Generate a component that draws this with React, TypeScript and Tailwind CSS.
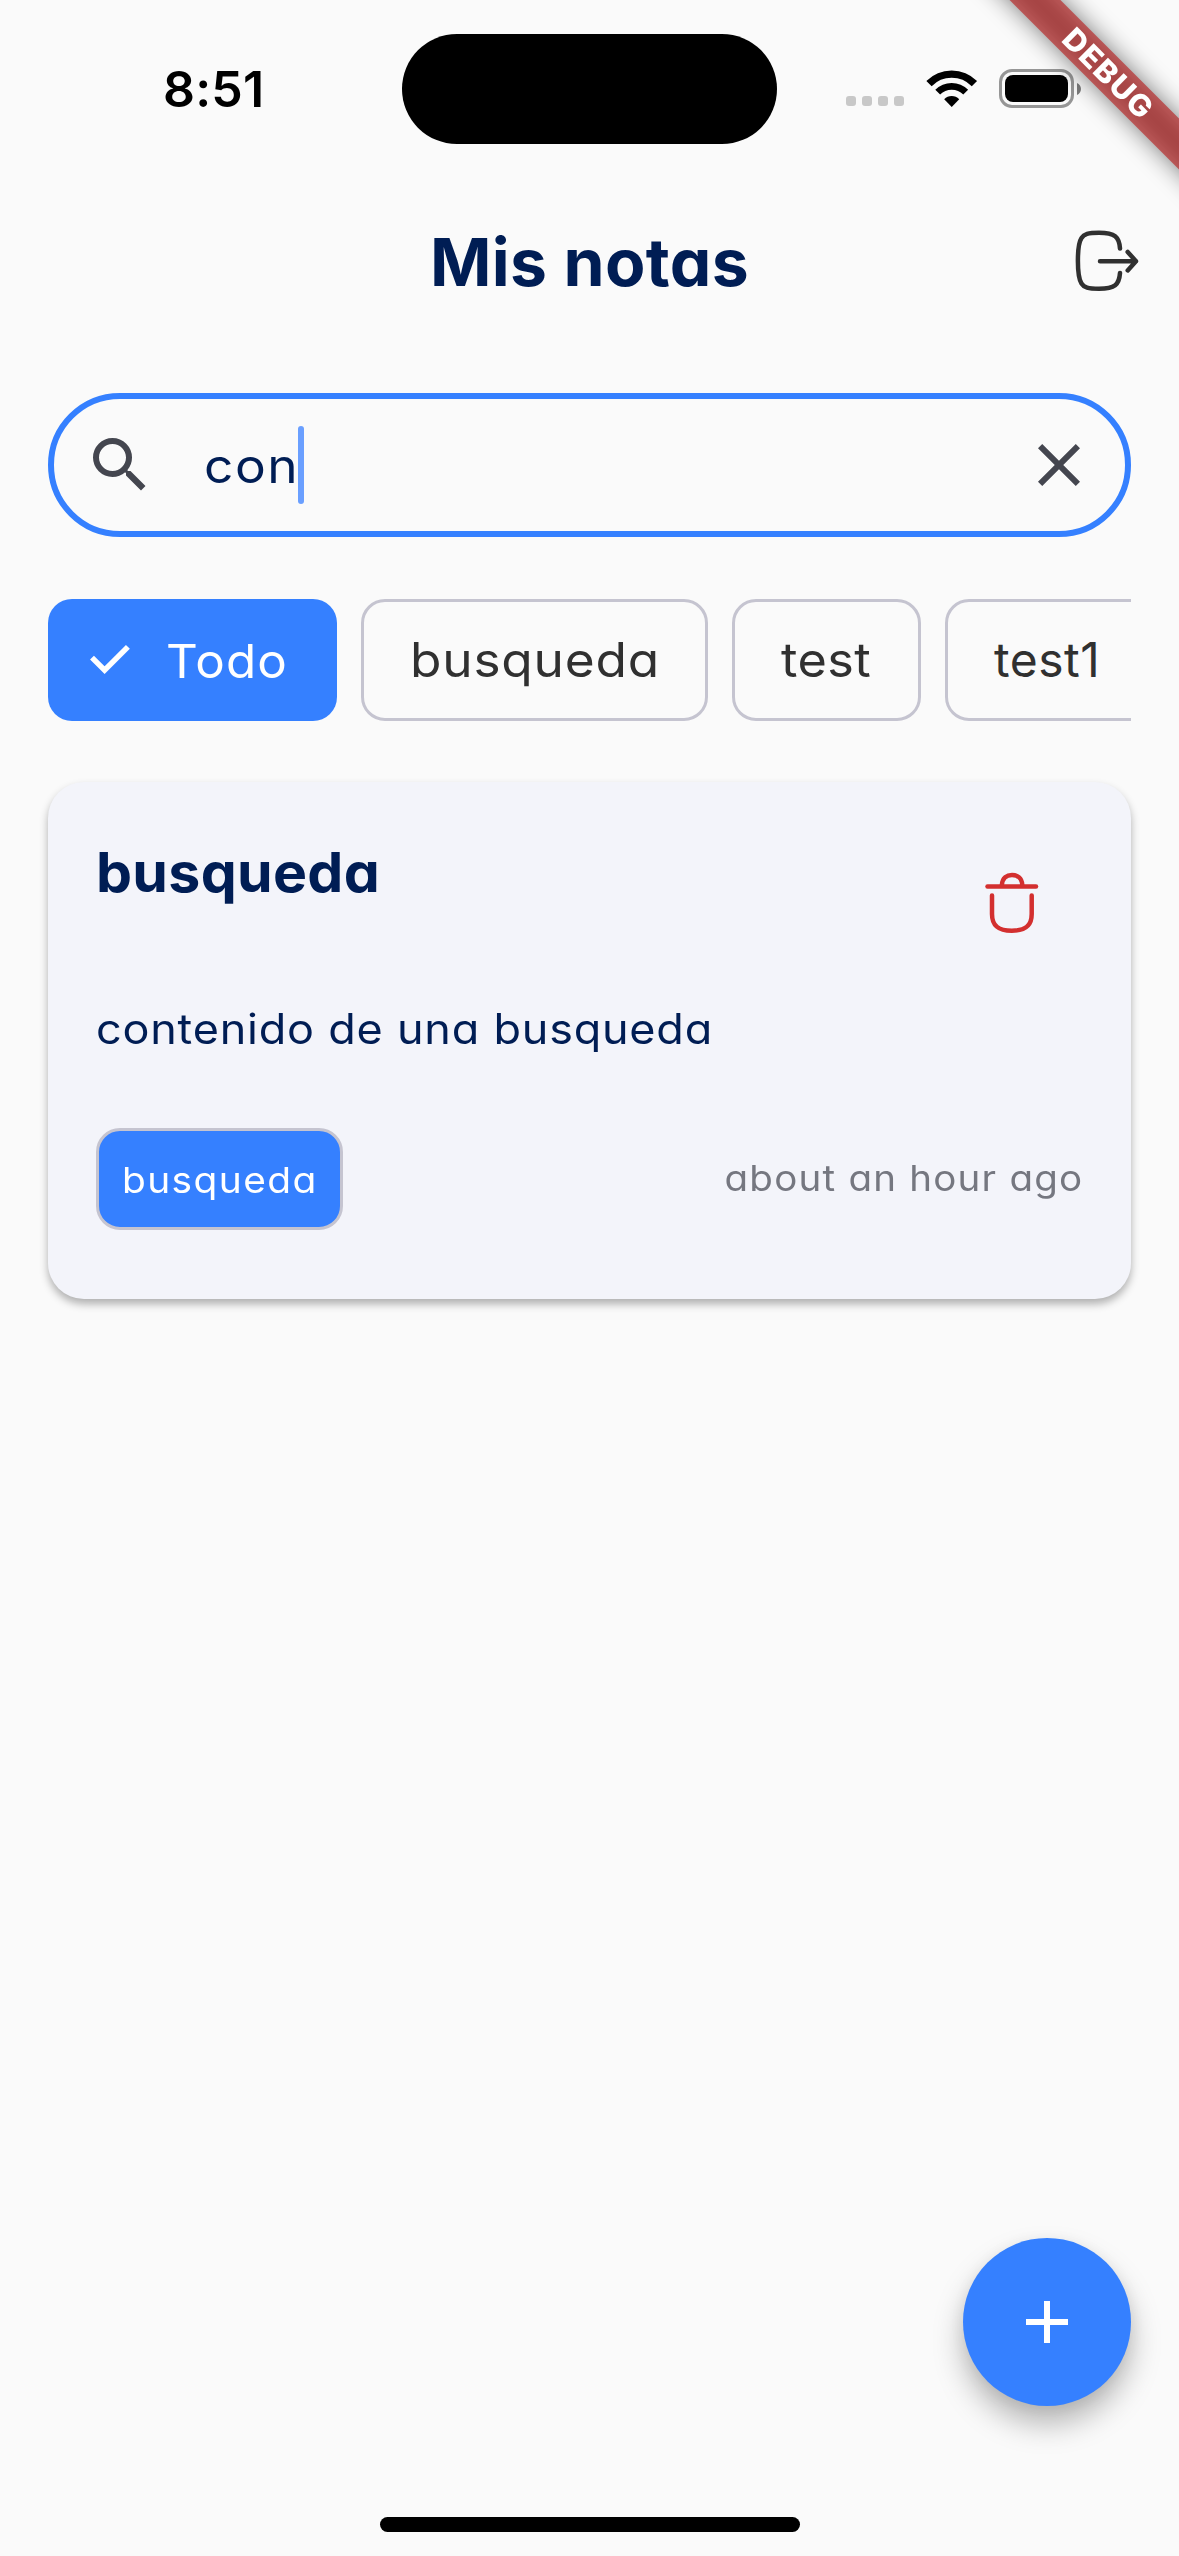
const tags = [
  { label: "busqueda", box: "w-[347px]", text: "scale-x-[1.07] tracking-[0.75px]" },
  { label: "test", box: "w-[189px]", text: "scale-x-[1.05] tracking-[0.4px]" },
  { label: "test1", box: "w-[215px]", text: "tracking-[0.5px]" },
];

function WifiIcon() {
  return (
    <svg viewBox="925 68 54 40" className="h-[40px] w-[54px]" fill="none" stroke="#000">
      <path d="M929 82.7A31.8 31.8 0 0 1 974.4 82.7" strokeWidth="7.4" />
      <path d="M937.7 91.2A19.7 19.7 0 0 1 965.7 91.2" strokeWidth="6.8" />
      <path d="M944.2 98.2A10.6 10.6 0 0 1 959.2 98.2L951.7 106Z" fill="#000" stroke="none" />
    </svg>
  );
}

function StatusBar() {
  return (
    <div className="flex h-[177px] shrink-0 items-center">
      <div className="w-[402px] pl-[163px] text-[50px] font-semibold leading-none tracking-[0.2px] text-black">
        8:51
      </div>
      <div className="h-[110px] w-[375px] rounded-full bg-black" />
      <div className="flex items-center pl-[69px]">
        <div className="mt-[25px] flex gap-[6px]">
          <span className="size-[10px] rounded-[3px] bg-[#c8c8c8]" />
          <span className="size-[10px] rounded-[3px] bg-[#c8c8c8]" />
          <span className="size-[10px] rounded-[3px] bg-[#c8c8c8]" />
          <span className="size-[10px] rounded-[3px] bg-[#c8c8c8]" />
        </div>
        <div className="ml-[21px]">
          <WifiIcon />
        </div>
        <div className="ml-[20px] h-[39px] w-[75px] rounded-[13px] border-[3px] border-[#969696] p-[3px]">
          <div className="size-full rounded-[8px] bg-black" />
        </div>
        <svg viewBox="0 0 4 12" className="ml-[3px] h-[12px] w-[4px]">
          <path d="M0 0C2.5 1 4 3.500 4 6S2.500 11 0 12Z" fill="#7c7c7c" />
        </svg>
      </div>
    </div>
  );
}

function DebugBanner() {
  return (
    <div className="pointer-events-none absolute right-0 top-0 h-[240px] w-[260px] overflow-hidden">
      <div className="absolute -left-[12.5px] top-[53.5px] h-[36px] w-[400px] rotate-45 bg-black/50 blur-[12px]" />
      <div className="absolute -left-[12.5px] top-[53.5px] flex h-[36px] w-[400px] rotate-45 items-center justify-center bg-[#b71c1c]/63 text-[30px] font-extrabold leading-none tracking-[1.2px] text-white">
        <span className="ml-[4px] inline-block scale-x-[1.04]">DEBUG</span>
      </div>
    </div>
  );
}

function Header() {
  return (
    <header className="grid h-[168px] shrink-0 grid-cols-[1fr_auto_1fr] items-center pr-9">
      <span />
      <h1 className="pl-9 pt-[2px] text-[66px] font-[660] leading-none tracking-[0.4px] text-[#001d54]">Mis notas</h1>
      <svg
        viewBox="1071 225 72 72"
        className="size-[72px] justify-self-end"
        fill="none"
        stroke="#303030"
        strokeWidth="4.5"
        strokeLinecap="round"
        strokeLinejoin="round"
      >
        <path d="M1120 248.500C1119.200 237 1115 232.800 1099 232.800C1088 232.800 1084 234 1081.500 238C1078.200 243 1077.900 252 1077.900 260.800C1077.900 269.500 1078.200 278.500 1081.500 283.500C1084 287.500 1088 288.700 1099 288.700C1115 288.700 1119.200 284.500 1120 273" />
        <path d="M1100 261.200H1136M1127.700 252L1136 261.200L1127.700 270.400" />
      </svg>
    </header>
  );
}

function SearchField() {
  return (
    <div className="mt-12 flex h-[144px] shrink-0 items-center rounded-full border-[6px] border-[#3580ff] pl-[30px] pr-[30px]">
      <svg viewBox="0 0 24 24" className="size-[72px]" fill="#44464f">
        <path d="M15.5 14h-.79l-.28-.27A6.471 6.471 0 0 0 16 9.500 6.500 6.500 0 1 0 9.500 16c1.610 0 3.090-.59 4.230-1.570l.27.28v.79l5 4.990L20.490 19l-4.990-5zm-6 0C7.010 14 5 11.990 5 9.500S7.010 5 9.500 5 14 7.010 14 9.500 11.990 14 9.500 14z" />
      </svg>
      <div className="ml-[48px] w-[94px] pt-[2px] text-[48px] leading-none text-[#001d54]">
        <span className="inline-block origin-left scale-x-[1.07] tracking-[1.5px]">con</span>
      </div>
      <span className="h-[78px] w-[6px] rounded-full bg-[#6a9fff]" />
      <svg viewBox="0 0 24 24" className="ml-auto size-[72px]" fill="#44464f">
        <path d="M19 6.410L17.590 5 12 10.590 6.410 5 5 6.410 10.590 12 5 17.590 6.410 19 12 13.410 17.590 19 19 17.590 13.410 12z" />
      </svg>
    </div>
  );
}

function FilterChips() {
  return (
    <div className="mt-[62px] flex h-[122px] shrink-0 gap-6 overflow-hidden text-[48px] leading-none text-[#303030]">
      <div className="flex w-[289px] shrink-0 items-center rounded-[24px] bg-[#3580ff] pl-[34px] text-[47px] text-white">
        <svg viewBox="0 0 54 54" className="size-[54px]" fill="none" stroke="#fff" strokeWidth="5.5">
          <path d="M10 24.600L22.600 37.200L45.900 13.900" />
        </svg>
        <span className="ml-[30px] inline-block origin-left scale-x-[1.05] tracking-[1.1px]">Todo</span>
      </div>
      {tags.map((tag) => (
        <div
          key={tag.label}
          className={`flex shrink-0 items-center rounded-[24px] border-[3px] border-[#c5c4d0] pl-[46px] ${tag.box}`}
        >
          <span className={`inline-block origin-left ${tag.text}`}>{tag.label}</span>
        </div>
      ))}
    </div>
  );
}

function NoteCard() {
  return (
    <article className="mt-[61px] flex h-[517px] shrink-0 flex-col rounded-[36px] bg-[#f3f4fa] px-12 pt-12 shadow-[0_5px_9px_rgba(0,0,0,0.3)]">
      <div className="flex h-[146px] items-start justify-between">
        <h2 className="origin-left scale-x-[1.04] text-[55px] font-[660] leading-[84px] tracking-[0.3px] text-[#001d54]">
          busqueda
        </h2>
        <div className="flex size-[144px] items-center justify-center">
          <svg
            viewBox="975 866 72 72"
            className="size-[72px]"
            fill="none"
            stroke="#d32f2f"
            strokeWidth="4.5"
            strokeLinecap="round"
          >
            <path d="M987.500 886.400H1036" />
            <path d="M1001.900 885C1002.300 877.500 1007 875 1012 875S1021.900 877.500 1022.300 885" />
            <path d="M992 895.500V914C992 926.500 999 930.700 1011.800 930.700S1031.700 926.500 1031.700 914V895.500" />
          </svg>
        </div>
      </div>
      <p className="mt-[23px] origin-left scale-x-[1.07] text-[42px] leading-[60px] tracking-[0.75px] text-[#001d54]">
        contenido de una busqueda
      </p>
      <div className="mt-[69px] flex h-[102px] items-center justify-between text-[36px] leading-none">
        <div className="flex h-[102px] w-[247px] items-center rounded-[24px] border-[3px] border-[#c5c4d0] bg-[#3580ff] pl-[23px] pt-[2px] text-white">
          <span className="inline-block origin-left scale-x-[1.08] tracking-[1.3px]">busqueda</span>
        </div>
        <span className="inline-block origin-right scale-x-[1.07] pb-[3px] tracking-[1.15px] text-[#757780]">
          about an hour ago
        </span>
      </div>
    </article>
  );
}

export default function App() {
  return (
    <div className="relative flex h-[2556px] w-[1179px] flex-col overflow-hidden bg-[#fafafa] font-['Inter',sans-serif] [font-feature-settings:'cv11']">
      <StatusBar />
      <Header />
      <main className="flex flex-1 flex-col px-12">
        <SearchField />
        <FilterChips />
        <NoteCard />
        <button className="mb-[111px] mt-auto flex size-[168px] shrink-0 items-center justify-center self-end rounded-full bg-[#3580ff] shadow-[0_18px_30px_rgba(0,0,0,0.27),0_3px_15px_rgba(0,0,0,0.06)]">
          <svg viewBox="0 0 42 42" className="size-[42px]" fill="#fff">
            <path d="M18 0h6v18h18v6H24v18h-6V24H0v-6h18z" />
          </svg>
        </button>
      </main>
      <div className="mb-6 h-[15px] w-[420px] shrink-0 self-center rounded-full bg-black" />
      <DebugBanner />
    </div>
  );
}
